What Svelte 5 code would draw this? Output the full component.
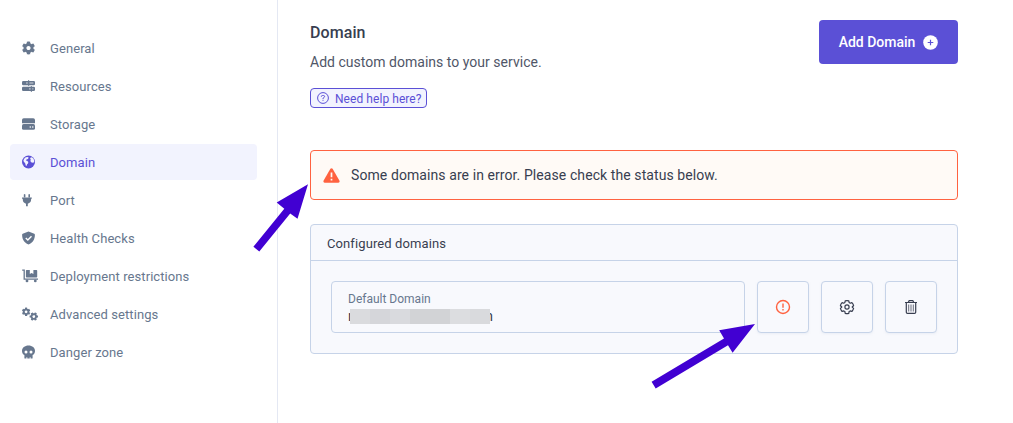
<script>
  const items = [
    ['General', 'gear'], ['Resources', 'sliders'], ['Storage', 'drive'],
    ['Domain', 'globe'], ['Port', 'plug'], ['Health Checks', 'shield'],
    ['Deployment restrictions', 'cart'], ['Advanced settings', 'gears'], ['Danger zone', 'skull']
  ];
  const gear = 'M487.4 315.7l-42.6-24.6c4.3-23.2 4.3-47 0-70.2l42.6-24.6c4.9-2.8 7.1-8.6 5.5-14-11.1-35.6-30-67.8-54.7-94.6-3.8-4.1-10-5.1-14.8-2.3L380.8 110c-17.9-15.4-38.5-27.3-60.8-35.1V25.8c0-5.6-3.9-10.5-9.4-11.7-36.7-8.2-74.3-7.8-109.2 0-5.5 1.2-9.4 6.1-9.4 11.7V75c-22.2 7.9-42.8 19.8-60.8 35.1L88.7 85.5c-4.9-2.8-11-1.9-14.8 2.3-24.7 26.7-43.6 58.9-54.7 94.6-1.7 5.4.6 11.2 5.5 14L67.3 221c-4.3 23.2-4.3 47 0 70.2l-42.6 24.6c-4.9 2.8-7.1 8.6-5.5 14 11.1 35.6 30 67.8 54.7 94.6 3.8 4.1 10 5.1 14.8 2.3l42.6-24.6c17.9 15.4 38.5 27.3 60.8 35.1v49.2c0 5.6 3.9 10.5 9.4 11.7 36.7 8.2 74.3 7.8 109.2 0 5.5-1.2 9.4-6.1 9.4-11.7v-49.2c22.2-7.9 42.8-19.8 60.8-35.1l42.6 24.6c4.9 2.8 11 1.9 14.8-2.3 24.7-26.7 43.6-58.9 54.7-94.6 1.5-5.5-.7-11.3-5.6-14.1zM256 336c-44.1 0-80-35.9-80-80s35.9-80 80-80 80 35.9 80 80-35.9 80-80 80z';
  const blocks = ['#dadbde', '#d5d6da', '#d9dade', '#d2d3d6', '#d2d3d6', '#dcdde0', '#d9dadd'];
</script>

<div class="page">
  <nav>
    {#each items as [label, icon]}
      <div class="item" class:active={label === 'Domain'}>
        <svg class="nav-icon" width="17" height="14" viewBox="0 0 17 14" fill="currentColor">
          {#if icon === 'gear'}
            <path transform="translate(-.2 .3) scale(.0262)" d={gear} />
          {:else if icon === 'sliders'}
            <rect x="0" y="2" width="13" height="4.2" rx="1.2" />
            <rect x="0" y="7.8" width="13" height="4.2" rx="1.2" />
            <path d="M6.6 1.3v5.4M9.4 7.2v5.5" stroke="currentColor" stroke-width="1.2" />
            <path d="M4 4h1.8M7.4 4h4M7 9.9h1.7M10.2 9.9h1.2" stroke="#fff" stroke-width=".7" />
          {:else if icon === 'drive'}
            <path d="M0 6.2V3a1.8 1.8 0 0 1 1.8-1.8h9.4A1.8 1.8 0 0 1 13 3v3.2z" />
            <rect x="0" y="7.1" width="13" height="5.7" rx="1.6" />
            <circle cx="8.3" cy="10" r=".8" fill="#fff" /><circle cx="10.8" cy="10" r=".8" fill="#fff" />
          {:else if icon === 'globe'}
            <circle cx="6.5" cy="7" r="6.5" />
            <path fill="#f2f2ff" d="M2.2 3.7 3.7 2.3l2.2-.4.8.9-.8 1.1-1.4.6-.7.9 1.3.4 1.2 1.3-.3 1.3-.9.8-.6 1.8-.8-.6-.4-1.9-1.2-1.4L1.4 6l.2-1zM8.3 2.800l1.600-.6 1.600 1.600.8 2-.2 1.500-1.300.4-1.700-.5L8.200 5.700l1-.9-1-.5z" />
          {:else if icon === 'plug'}
            <path d="M1.800 1.400q.8-1 1.600 0v2.800H1.800zM6.400 1.400q.8-1 1.600 0v2.800H6.400zM0 4.400h9.800v1.300h-.7v1.100c0 2-1.300 3.400-3.300 3.900v2.500H4v-2.500C2 10.200.8 8.800.8 6.800V5.700H0z" />
          {:else if icon === 'shield'}
            <path d="M6.500.4 12.300 2.800q.6.3.6.9c0 4.200-1.800 7.800-6.400 9.900C1.900 11.500.1 7.900.1 3.700q0-.6.6-.9z" />
            <path d="m3.800 7 2 2 3.700-3.800" fill="none" stroke="#fff" stroke-width="1.400" />
          {:else if icon === 'cart'}
            <path d="M.2 1.200h2v9h13.800" fill="none" stroke="currentColor" stroke-width="1.300" />
            <path d="M4.600 1h3.200v4l1.800-1 1.800 1V1h3.100q.7 0 .7.700v6q0 .8-.8.8H4.700q-.8 0-.8-.8v-6q0-.7.7-.7z" />
            <circle cx="5" cy="11.900" r="1.400" /><circle cx="13.300" cy="11.900" r="1.400" />
          {:else if icon === 'gears'}
            <path transform="translate(-.3 .4) scale(.0172)" d={gear} />
            <path transform="rotate(30 11.800 9.500) translate(7.400 5.100) scale(.0172)" d={gear} />
          {:else}
            <path d="M6.500.5c3.700 0 6.500 2.300 6.500 5.400 0 1.900-.9 3.300-2.400 4.200v2.800q0 .6-.6.6H8.600v-1.200h-.9v1.200H5.300v-1.200h-.9v1.200H3q-.6 0-.6-.6v-2.800C.9 9.200 0 7.800 0 5.900 0 2.800 2.800.5 6.500.5z" />
            <circle cx="4" cy="7" r="1.500" fill="#fff" /><circle cx="9" cy="7" r="1.500" fill="#fff" />
          {/if}
        </svg>
        <span>{label}</span>
      </div>
    {/each}
  </nav>

  <main>
    <header>
      <div class="intro">
        <h1>Domain</h1>
        <p>Add custom domains to your service.</p>
        <button class="help">
          <svg width="12" height="12" viewBox="0 0 12 12" fill="none" stroke="currentColor">
            <circle cx="6" cy="6" r="5.4" />
            <path d="M4.400 4.800V4.500q0-1 1.100-1h.9q1.200 0 1.200 1 0 .7-.7 1.100L6 6.200v.8M6 7.800v1" />
          </svg>
          <span>Need help here?</span>
        </button>
      </div>
      <button class="add">
        <span>Add Domain</span>
        <svg width="15" height="15" viewBox="0 0 15 15">
          <circle cx="7.5" cy="7.5" r="7.3" fill="#fff" />
          <path d="M7.500 4.700v5.600M4.700 7.500h5.600" stroke="#5b50d6" stroke-width="1.200" />
        </svg>
      </button>
    </header>

    <div class="alert">
      <svg width="17" height="15" viewBox="0 0 17 15">
        <path d="M7.400.8q1.100-1.300 2.200 0l6.900 12q.5 1.700-1.100 1.900H1.600Q0 14.500.5 12.800z" fill="#ff6240" />
        <path d="M8.500 4.500v4.800M8.500 10.800v1.800" stroke="#fffaf6" stroke-width="1.700" />
      </svg>
      <span>Some domains are in error. Please check the status below.</span>
    </div>

    <section>
      <h2>Configured domains</h2>
      <div class="row">
        <div class="field">
          <div class="label">Default Domain</div>
          <div class="value">
            <span>r</span><span>n</span>
            <div class="mask">
              {#each blocks as color}<i style="background:{color}"></i>{/each}
            </div>
          </div>
        </div>
        <button class="tool error" aria-label="Status">
          <svg width="16" height="16" viewBox="0 0 16 16" fill="none" stroke="currentColor" stroke-width="1.400">
            <circle cx="8" cy="8" r="6.500" /><path d="M8 4.400v4.300M8 9.900v1.500" />
          </svg>
        </button>
        <button class="tool" aria-label="Settings">
          <svg width="16" height="16" viewBox="0 0 16 16" fill="none" stroke="currentColor" stroke-width="1.200" stroke-linejoin="round">
            <path d="M6.200 1.800q1.800-.5 3.600 0l.3 1.700 1.200.7 1.600-.6q1.300 1.300 1.700 3.100l-1.300 1.100v.5l1.300 1.100q-.5 1.800-1.700 3.100l-1.600-.6-1.200.7-.3 1.700q-1.800.5-3.600 0l-.3-1.700-1.200-.7-1.600.6Q1.900 11.200 1.400 9.400l1.300-1.100v-.5L1.400 6.700Q1.800 4.900 3.100 3.600l1.600.6 1.200-.7z" />
            <circle cx="8" cy="8" r="2.100" />
          </svg>
        </button>
        <button class="tool" aria-label="Delete">
          <svg width="16" height="16" viewBox="0 0 16 16" fill="none" stroke="currentColor" stroke-width="1.200">
            <path d="M2 3.500h12M5.300 3.300 6.200 1.600h3.600l.9 1.700M3.300 3.700v9.500q0 1.200 1.200 1.200h7q1.200 0 1.200-1.200V3.700" />
            <path d="M5.700 5.500v7M8 5.500v7M10.300 5.500v7" stroke-width="1" opacity=".75" />
          </svg>
        </button>
      </div>
    </section>
  </main>

  <svg class="arrows" width="1013" height="423" viewBox="0 0 1013 423" fill="#4100d2">
    <path d="M308 184.200 276.700 202.500 284.300 208.800 253.400 246.700 259.300 251.500 290.200 213.500 297.500 218.800z" />
    <path d="M755 324 719.200 330.300 724 338.600 651.600 381.700 655.700 388.400 728 345.300 732.600 352.700z" />
  </svg>
</div>

<style>
  :global(body) { background: #fff; overflow: hidden; }
  * { box-sizing: border-box; }
  .page { position: relative; display: flex; width: 1013px; height: 423px; font-family: Roboto, sans-serif; color: #383e50; }
  nav { display: flex; flex-direction: column; gap: 2px; width: 278px; padding: 30px 20px 0 10px; border-right: 1px solid #e4e8f3; }
  .item { display: flex; align-items: center; gap: 11px; height: 36px; padding-left: 12px; border-radius: 4px; color: #67778e; font-size: 13px; font-weight: 450; letter-spacing: .08px; white-space: nowrap; }
  .active { background: #f2f3fe; color: #5b50d6; }
  svg { display: block; flex: none; }
  main { display: flex; flex-direction: column; width: 680px; padding: 20px 0 0 32px; }
  header { display: flex; justify-content: space-between; align-items: flex-start; height: 130px; }
  h1, h2, p { margin: 0; }
  h1 { padding-top: 1px; font-size: 16px; line-height: 24px; font-weight: 500; letter-spacing: .08px; }
  p { margin-top: 7px; font-size: 14px; line-height: 20px; color: #505668; letter-spacing: .02px; }
  button { font-family: inherit; margin: 0; }
  .help { display: flex; align-items: center; gap: 6px; width: 117px; height: 20px; margin-top: 16px; padding: 1px 0 0 6px; border: 1px solid #5b50d6; border-radius: 4px; background: #f2f3fe; color: #5b50d6; font-size: 12px; font-weight: 450; letter-spacing: .06px; white-space: nowrap; }
  .help svg { margin-top: -1px; }
  .add { display: flex; align-items: center; justify-content: center; gap: 8px; width: 139px; height: 44px; padding: 0; border: 0; border-radius: 4px; background: #5b50d6; color: #fff; font-size: 14px; font-weight: 500; white-space: nowrap; }
  .alert { display: flex; align-items: center; gap: 11px; height: 50px; padding-left: 12px; border: 1px solid #ff6240; border-radius: 4px; background: #fffaf6; font-size: 14px; letter-spacing: .085px; white-space: nowrap; }
  section { height: 130px; margin-top: 24px; border: 1px solid #c6d3e8; border-radius: 4px; background: #f8f9fd; }
  h2 { height: 36px; padding-left: 16px; border-bottom: 1px solid #c6d3e8; font-size: 13px; line-height: 37px; font-weight: 450; letter-spacing: .1px; }
  .row { display: flex; gap: 12px; padding: 20px; }
  .field { width: 414px; height: 52px; padding: 9px 16px; border: 1px solid #c6d3e8; border-radius: 4px; }
  .label { font-size: 12px; line-height: 16px; color: #67778e; }
  .value { position: relative; display: flex; justify-content: space-between; width: 145px; height: 17px; margin-top: 1px; font-size: 14px; line-height: 16px; }
  .mask { position: absolute; left: 2px; top: 1px; display: flex; height: 15px; }
  .mask i { width: 20px; }
  .tool { display: flex; align-items: center; justify-content: center; width: 52px; height: 52px; padding: 0; border: 1px solid #c6d3e8; border-radius: 4px; background: #f8f9fd; color: #383e50; box-shadow: 0 1px 2px #dfe5f080; }
  .error { color: #ff6240; }
  .arrows { position: absolute; left: 0; top: 0; pointer-events: none; }
</style>
